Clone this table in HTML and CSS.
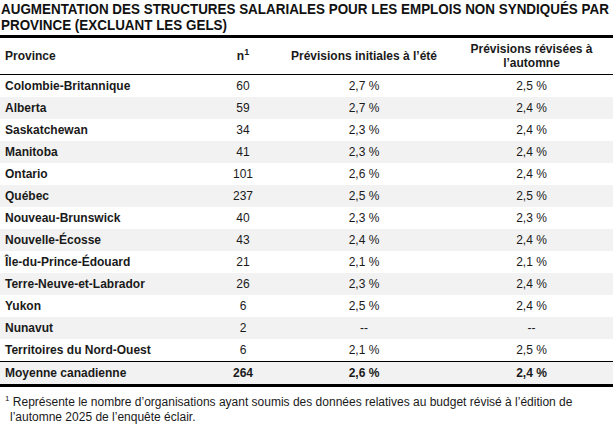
FILE: index.html
```html
<!DOCTYPE html>
<html lang="fr">
<head>
<meta charset="utf-8">
<link rel="stylesheet" href="styles.css">
</head>
<body>
<h1 class="title"><span class="title-text">AUGMENTATION DES STRUCTURES SALARIALES POUR LES EMPLOIS NON SYNDIQUÉS PAR PROVINCE (EXCLUANT LES GELS)</span></h1>
<table class="data">
  <colgroup>
    <col class="c1"><col class="c2"><col class="c3"><col class="c4">
  </colgroup>
  <thead>
    <tr>
      <th class="left">Province</th>
      <th>n<sup>1</sup></th>
      <th>Prévisions initiales à l’été</th>
      <th>Prévisions révisées à<br>l’automne</th>
    </tr>
  </thead>
  <tbody>
    <tr><td class="left">Colombie-Britannique</td><td>60</td><td>2,7&nbsp;%</td><td>2,5&nbsp;%</td></tr>
    <tr><td class="left">Alberta</td><td>59</td><td>2,7&nbsp;%</td><td>2,4&nbsp;%</td></tr>
    <tr><td class="left">Saskatchewan</td><td>34</td><td>2,3&nbsp;%</td><td>2,4&nbsp;%</td></tr>
    <tr><td class="left">Manitoba</td><td>41</td><td>2,3&nbsp;%</td><td>2,4&nbsp;%</td></tr>
    <tr><td class="left">Ontario</td><td>101</td><td>2,6&nbsp;%</td><td>2,4&nbsp;%</td></tr>
    <tr><td class="left">Québec</td><td>237</td><td>2,5&nbsp;%</td><td>2,5&nbsp;%</td></tr>
    <tr><td class="left">Nouveau-Brunswick</td><td>40</td><td>2,3&nbsp;%</td><td>2,3&nbsp;%</td></tr>
    <tr><td class="left">Nouvelle-Écosse</td><td>43</td><td>2,4&nbsp;%</td><td>2,4&nbsp;%</td></tr>
    <tr><td class="left">Île-du-Prince-Édouard</td><td>21</td><td>2,1&nbsp;%</td><td>2,1&nbsp;%</td></tr>
    <tr><td class="left">Terre-Neuve-et-Labrador</td><td>26</td><td>2,3&nbsp;%</td><td>2,4&nbsp;%</td></tr>
    <tr><td class="left">Yukon</td><td>6</td><td>2,5&nbsp;%</td><td>2,4&nbsp;%</td></tr>
    <tr><td class="left">Nunavut</td><td>2</td><td>--</td><td>--</td></tr>
    <tr><td class="left">Territoires du Nord-Ouest</td><td>6</td><td>2,1&nbsp;%</td><td>2,5&nbsp;%</td></tr>
  </tbody>
  <tfoot>
    <tr><td class="left">Moyenne canadienne</td><td>264</td><td>2,6&nbsp;%</td><td>2,4&nbsp;%</td></tr>
  </tfoot>
</table>
<p class="note"><sup>1</sup> Représente le nombre d’organisations ayant soumis des données relatives au budget révisé à l’édition de l’automne 2025 de l’enquête éclair.</p>
</body>
</html>
```

FILE: styles.css
```css
html, body {
  margin: 0;
  padding: 0;
  background: #ffffff;
}
body {
  font-family: "Liberation Sans", Arial, sans-serif;
  font-size: 12px;
  color: #1a1a1a;
  width: 613px;
  overflow: hidden;
}
.title {
  font-family: "Liberation Sans", Arial, sans-serif;
  font-weight: bold;
  font-size: 15px;
  line-height: 16px;
  margin: 0;
  padding: 1px 0 0 1px;
  height: 35px;
  box-sizing: border-box;
  color: #111;
  overflow: hidden;
}
.title-text {
  display: block;
  width: 690px;
  transform: scaleX(0.895);
  transform-origin: 0 0;
}
.data {
  width: 613px;
  border-collapse: collapse;
  table-layout: fixed;
  border-top: 3px solid #000;
  border-bottom: 3px solid #000;
}
.c1 { width: 208px; }
.c2 { width: 70px; }
.c3 { width: 172px; }
.c4 { width: 163px; }
th, td {
  text-align: center;
  padding: 0;
}
th {
  font-weight: bold;
  height: 36px;
  line-height: 14px;
  vertical-align: middle;
  border-bottom: 1px solid #000;
}
th sup {
  font-size: 9px;
  vertical-align: 5px;
  line-height: 0;
}
td {
  height: 22px;
  line-height: 14px;
}
.left {
  text-align: left;
  padding-left: 5px;
  font-weight: bold;
}
tbody tr:nth-child(even) td {
  background: #f2f2f2;
}
tfoot td {
  background: #f2f2f2;
  font-weight: bold;
  border-top: 1px solid #000;
}
.note {
  margin: 8px 0 0 0;
  padding-left: 10px;
  text-indent: -5px;
  line-height: 15px;
  font-size: 12px;
}
.note sup {
  font-size: 8px;
  vertical-align: 5px;
  line-height: 0;
}
```
